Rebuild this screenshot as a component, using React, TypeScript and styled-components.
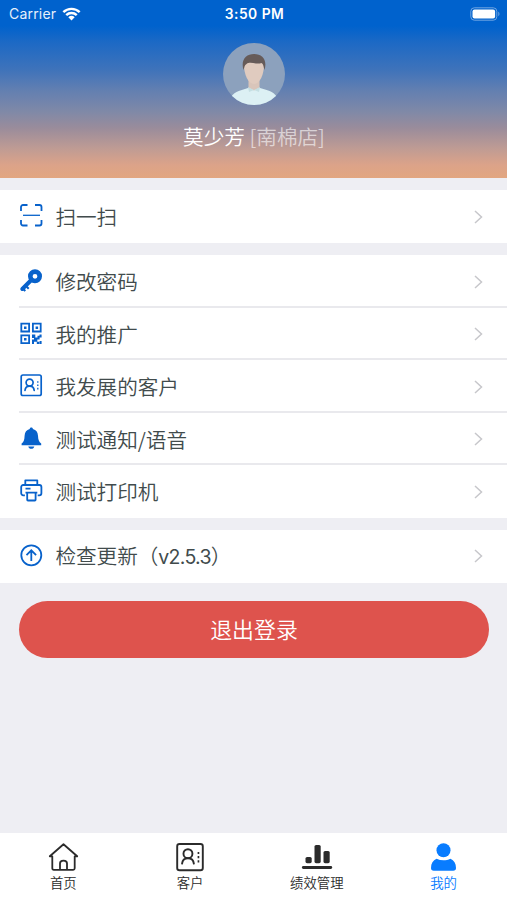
import React from 'react';
import styled, { createGlobalStyle } from 'styled-components';

const GlobalStyle = createGlobalStyle`
  * { box-sizing: border-box; }
  body { margin: 0; background: #eeeef3; }
  button { font: inherit; border: 0; padding: 0; }
`;

const Page = styled.div`
  width: 100%;
  height: 900px;
  display: flex;
  flex-direction: column;
  overflow: hidden;
  background: #eeeef3;
  color: #414b4c;
  font-family: Inter, 'Noto Sans CJK SC', sans-serif;
`;

const Header = styled.header`
  height: 178px;
  flex: none;
  display: flex;
  flex-direction: column;
  align-items: center;
  color: #fff;
  background: linear-gradient(180deg, #0062cd 0, #0062cd 26px, #1c69c5 42px, #3f73ba 70px, #627fb1 90px, #8089a7 112px, #9a8c9b 128px, #be9b94 148px, #dca389 165px, #e2a680 178px);
`;

const StatusBar = styled.div`
  width: 100%;
  height: 28px;
  padding: 0 7px 2px 9px;
  display: grid;
  grid-template-columns: 1fr auto 1fr;
  align-items: center;
  font-size: 14px;
  line-height: 26px;
`;

const Carrier = styled.div`
  display: flex;
  align-items: center;
  gap: 6px;
  letter-spacing: 0.2px;
  color: #e7f0fb;
`;

const Clock = styled.div`
  padding-top: 1px;
  font-size: 13.8px;
  font-weight: 600;
  letter-spacing: 0.5px;
`;

const Battery = styled.svg`
  width: 30px;
  height: 14px;
  justify-self: end;
`;

const Avatar = styled.svg`
  width: 62px;
  height: 62px;
  margin-top: 15px;
`;

const UserName = styled.div`
  margin-top: 16px;
  padding-left: 1px;
  font-size: 20.6px;
  line-height: 30px;
  white-space: pre;
  font-family: 'Noto Sans CJK SC', sans-serif;
  font-weight: 350;
`;

const Branch = styled.span`
  color: rgba(255, 255, 255, 0.6);
`;

const Group = styled.section`
  margin-top: 12.4px;
  flex: none;
  background: #fff;
`;

const Row = styled.div`
  height: 52.5px;
  padding-left: 19px;
  display: flex;

  &:not(:last-child) > div { border-bottom-color: #e9e9ed; }
`;

const RowBody = styled.div`
  flex: 1;
  height: 100%;
  padding-right: 23px;
  border-bottom: 2px solid transparent;
  display: flex;
  align-items: center;
`;

const RowIcon = styled.svg`
  width: 24px;
  height: 24px;
  margin: -1px 12.4px 0 0;
  color: #0862cb;
  fill: none;
  stroke: currentColor;
  stroke-width: 1.8;
`;

const RowLabel = styled.span`
  flex: 1;
  padding-top: 1px;
  font-family: 'Noto Sans CJK SC', sans-serif;
  font-weight: 350;
  font-size: 20.6px;
  line-height: 30px;
`;

const Version = styled.span`
  font-family: Inter, sans-serif;
  font-weight: 400;
  font-size: 19.5px;
  letter-spacing: -0.7px;
`;

const Chevron = styled.svg`
  width: 11px;
  height: 16px;
  margin-top: 2px;
  fill: none;
  stroke: #c7c7cb;
  stroke-width: 1.5;
`;

const Logout = styled.button`
  height: 57px;
  margin: 18.5px 18px 0 19px;
  padding-bottom: 3px;
  flex: none;
  border-radius: 29px;
  background: #de534d;
  color: #fff;
  font-family: 'Noto Sans CJK SC', sans-serif;
  font-weight: 350;
  font-size: 21.9px;
`;

const TabBar = styled.nav`
  height: 67.5px;
  margin-top: auto;
  flex: none;
  display: grid;
  grid-template-columns: repeat(4, 1fr);
  background: #fff;
`;

const Tab = styled.div<{ $active?: boolean }>`
  padding-top: 8px;
  display: flex;
  flex-direction: column;
  align-items: center;
  color: ${p => (p.$active ? '#087cff' : '#2b2b2b')};
  font-family: 'Noto Sans CJK SC', sans-serif;
  font-weight: 350;
  font-size: 13.4px;
  line-height: 18px;
`;

const TabIcon = styled.svg`
  width: 32px;
  height: 32px;
  fill: none;
  stroke: currentColor;
  stroke-width: 1.8;
  stroke-linecap: round;
  stroke-linejoin: round;
`;

const ContactShape = ({ weight = 1.7 }: { weight?: number }) => (
  <g strokeWidth={weight}>
    <rect x="2.200" y="2" width="20" height="20.500" rx="1.800" />
    <circle cx="10.600" cy="9.600" r="3.500" />
    <path d="M6 17.300c.3-2.500 1.900-4.100 4.600-4.100s4.300 1.600 4.600 4.100" strokeLinecap="round" />
    <path d="M18.800 8.200v1.600m0 1.700v1.600m0 1.700v1.600" strokeWidth="1.300" strokeLinecap="butt" />
  </g>
);

const icons: Record<string, React.ReactNode> = {
  scan: (
    <>
      <path d="M8.500 2H4a2 2 0 0 0-2 2v4M16 2h4.500a2 2 0 0 1 2 2v4M8.500 22.500H4a2 2 0 0 1-2-2V17M16 22.500h4.500a2 2 0 0 0 2-2V17" />
      <path d="M4 12.300h17" strokeWidth="1.300" />
    </>
  ),
  key: (
    <>
      <circle cx="16" cy="8.300" r="4.700" strokeWidth="4.600" />
      <path d="m12.300 12-9 9" strokeWidth="4" strokeLinecap="round" />
      <path d="m7 18 2.700 2.700M3.800 20.500l2.500 2.500" strokeWidth="2" />
    </>
  ),
  qr: (
    <>
      <path d="M2.300 2.700h7.800v7.800H2.300zM13.900 2.700h7.800v7.800h-7.800zM2.300 14.300h7.800v7.800H2.300z" />
      <path d="M5 5.400h2.500v2.500H5zM16.600 5.400h2.500v2.500h-2.500zM5 17h2.500v2.500H5zM13 13.400h3.300v3.200h2.200v-1.900h2v-1.300h2.100v3h-2v2h-2.300v2.300h2v2.400h-2.500v-2.300H15V23h-2v-4.500h2v-1.600h-2zM20.600 20h2v3h-2z" fill="currentColor" stroke="none" />
    </>
  ),
  contact: <ContactShape />,
  bell: (
    <path d="M12.300 1.400c1 0 1.600.7 1.600 1.700 3.200.8 4.900 3.200 5.100 6.700.2 4 .9 6.300 3.200 7.800v1.600H2.600v-1.600C4.900 16.100 5.400 13.800 5.600 9.800c.2-3.500 1.900-5.900 5.100-6.700 0-1 .6-1.700 1.600-1.700ZM9.300 20.400h6c-.3 1.600-1.500 2.400-3 2.400s-2.700-.8-3-2.400Z" fill="currentColor" stroke="none" />
  ),
  printer: (
    <path d="M6.300 7V2.300h12V7M5.900 17.300H4.200a2 2 0 0 1-2-2V9a2 2 0 0 1 2-2h16.200a2 2 0 0 1 2 2v6.300a2 2 0 0 1-2 2h-1.700M6.500 14.600h11.800M8.200 14.600h8.400v7.100q0 .8-.8.800H9q-.8 0-.8-.8ZM6.500 10.600h5" strokeLinejoin="round" />
  ),
  update: (
    <>
      <circle cx="12.300" cy="12.300" r="10" />
      <path d="M12.300 18.100V7.300m-4.800 4.800 4.800-4.800 4.800 4.800" />
    </>
  ),
};

interface Item { icon: string; label: string; version?: string }

const groups: Item[][] = [
  [{ icon: 'scan', label: '扫一扫' }],
  [
    { icon: 'key', label: '修改密码' },
    { icon: 'qr', label: '我的推广' },
    { icon: 'contact', label: '我发展的客户' },
    { icon: 'bell', label: '测试通知/语音' },
    { icon: 'printer', label: '测试打印机' },
  ],
  [{ icon: 'update', label: '检查更新', version: 'v2.5.3' }],
];

const MenuRow = ({ item }: { item: Item }) => (
  <Row>
    <RowBody>
      <RowIcon viewBox="0 0 24 24">{icons[item.icon]}</RowIcon>
      <RowLabel>
        {item.label}
        {item.version && <>（<Version>{item.version}</Version>）</>}
      </RowLabel>
      <Chevron viewBox="0 0 11 16"><path d="m2 2 6.500 6L2 14" /></Chevron>
    </RowBody>
  </Row>
);

export default function App() {
  return (
    <>
      <GlobalStyle />
      <Page>
        <Header>
          <StatusBar>
            <Carrier>
              Carrier
              <svg width="19" height="14" viewBox="0 0 19 14" fill="#fff">
                <path d="M.5 4.300a13 13 0 0 1 18 0L16.800 6a10.500 10.500 0 0 0-14.600 0ZM3.400 7.200a8.800 8.800 0 0 1 12.200 0L13.900 9a6.300 6.300 0 0 0-8.800 0ZM6.300 10.200a4.700 4.700 0 0 1 6.400 0l-3.200 3.200Z" />
              </svg>
            </Carrier>
            <Clock>3:50 PM</Clock>
            <Battery viewBox="0 0 30 14">
              <rect x=".8" y=".8" width="26" height="12.400" rx="3.500" fill="none" stroke="#6fa5e2" />
              <rect x="2.500" y="2.500" width="22.600" height="9" rx="2" fill="#fff" />
              <path d="M28.300 4.800c1.500.5 1.500 3.900 0 4.400Z" fill="#6fa5e2" />
            </Battery>
          </StatusBar>
          <Avatar viewBox="0 0 62 62">
            <defs><clipPath id="portrait"><circle cx="31" cy="31" r="31" /></clipPath></defs>
            <g clipPath="url(#portrait)">
              <rect width="62" height="62" fill="#8ca1bd" />
              <path d="M8 54c4-6 11-7 17-9h12c7 2 13 3 17 9v9H8Z" fill="#dcf0f4" />
              <path d="M25.500 34h11v11L31 47.500 25.500 45Z" fill="#d9c5ba" />
              <path d="M21 22c0-8 4-10 10-10s10 2 10 10c0 9-4 19-10 19s-10-10-10-19Z" fill="#e0cbbf" />
              <path d="M20.500 27C17.500 17 23 11 31 11c8.500 0 13.500 6 10.500 16-1-3-1-6-3-7-5 2-11-2-15 1-2 1-2 3-3 6Z" fill="#665b59" />
              <path d="m25 44 6 3 6-3-1 5-5-2-5 2Z" fill="#c5dfe3" />
            </g>
          </Avatar>
          <UserName>莫少芳 <Branch>[南棉店]</Branch></UserName>
        </Header>
        {groups.map((items, i) => (
          <Group key={i}>{items.map(item => <MenuRow key={item.icon} item={item} />)}</Group>
        ))}
        <Logout>退出登录</Logout>
        <TabBar>
          <Tab>
            <TabIcon viewBox="-.5 0 32 32">
              <path d="M2.300 15.300 16 3.300l13.700 12h-2.500v12q0 1.500-1.500 1.500H6.300q-1.500 0-1.500-1.500v-12ZM12.500 28.800v-6.300q0-2.800 3.500-2.800t3.500 2.800v6.300" />
            </TabIcon>
            首页
          </Tab>
          <Tab>
            <TabIcon viewBox="-.3 -.3 25 25"><ContactShape weight={1.5} /></TabIcon>
            客户
          </Tab>
          <Tab>
            <TabIcon viewBox="0 0 32 32">
              <path d="M2.300 26.500h27.500" strokeWidth="2.800" />
              <g fill="currentColor" stroke="none">
                <rect x="4.500" y="16" width="6.200" height="6.200" rx="1.600" />
                <rect x="13.500" y="4" width="6.200" height="18.200" rx="1.600" />
                <rect x="22.500" y="10" width="6.200" height="12.200" rx="1.600" />
              </g>
            </TabIcon>
            绩效管理
          </Tab>
          <Tab $active>
            <TabIcon viewBox="0.500 0 32 32">
              <g fill="currentColor" stroke="none">
                <circle cx="16" cy="9.200" r="7" />
                <path d="M9 17.800c4.500 2 9.500 2 14 0 3.500 1.500 5.500 4.500 5.500 9.200 0 1.700-1 2.800-2.800 2.800H6.300c-1.800 0-2.800-1.100-2.800-2.800 0-4.700 2-7.700 5.500-9.200Z" />
              </g>
            </TabIcon>
            我的
          </Tab>
        </TabBar>
      </Page>
    </>
  );
}
